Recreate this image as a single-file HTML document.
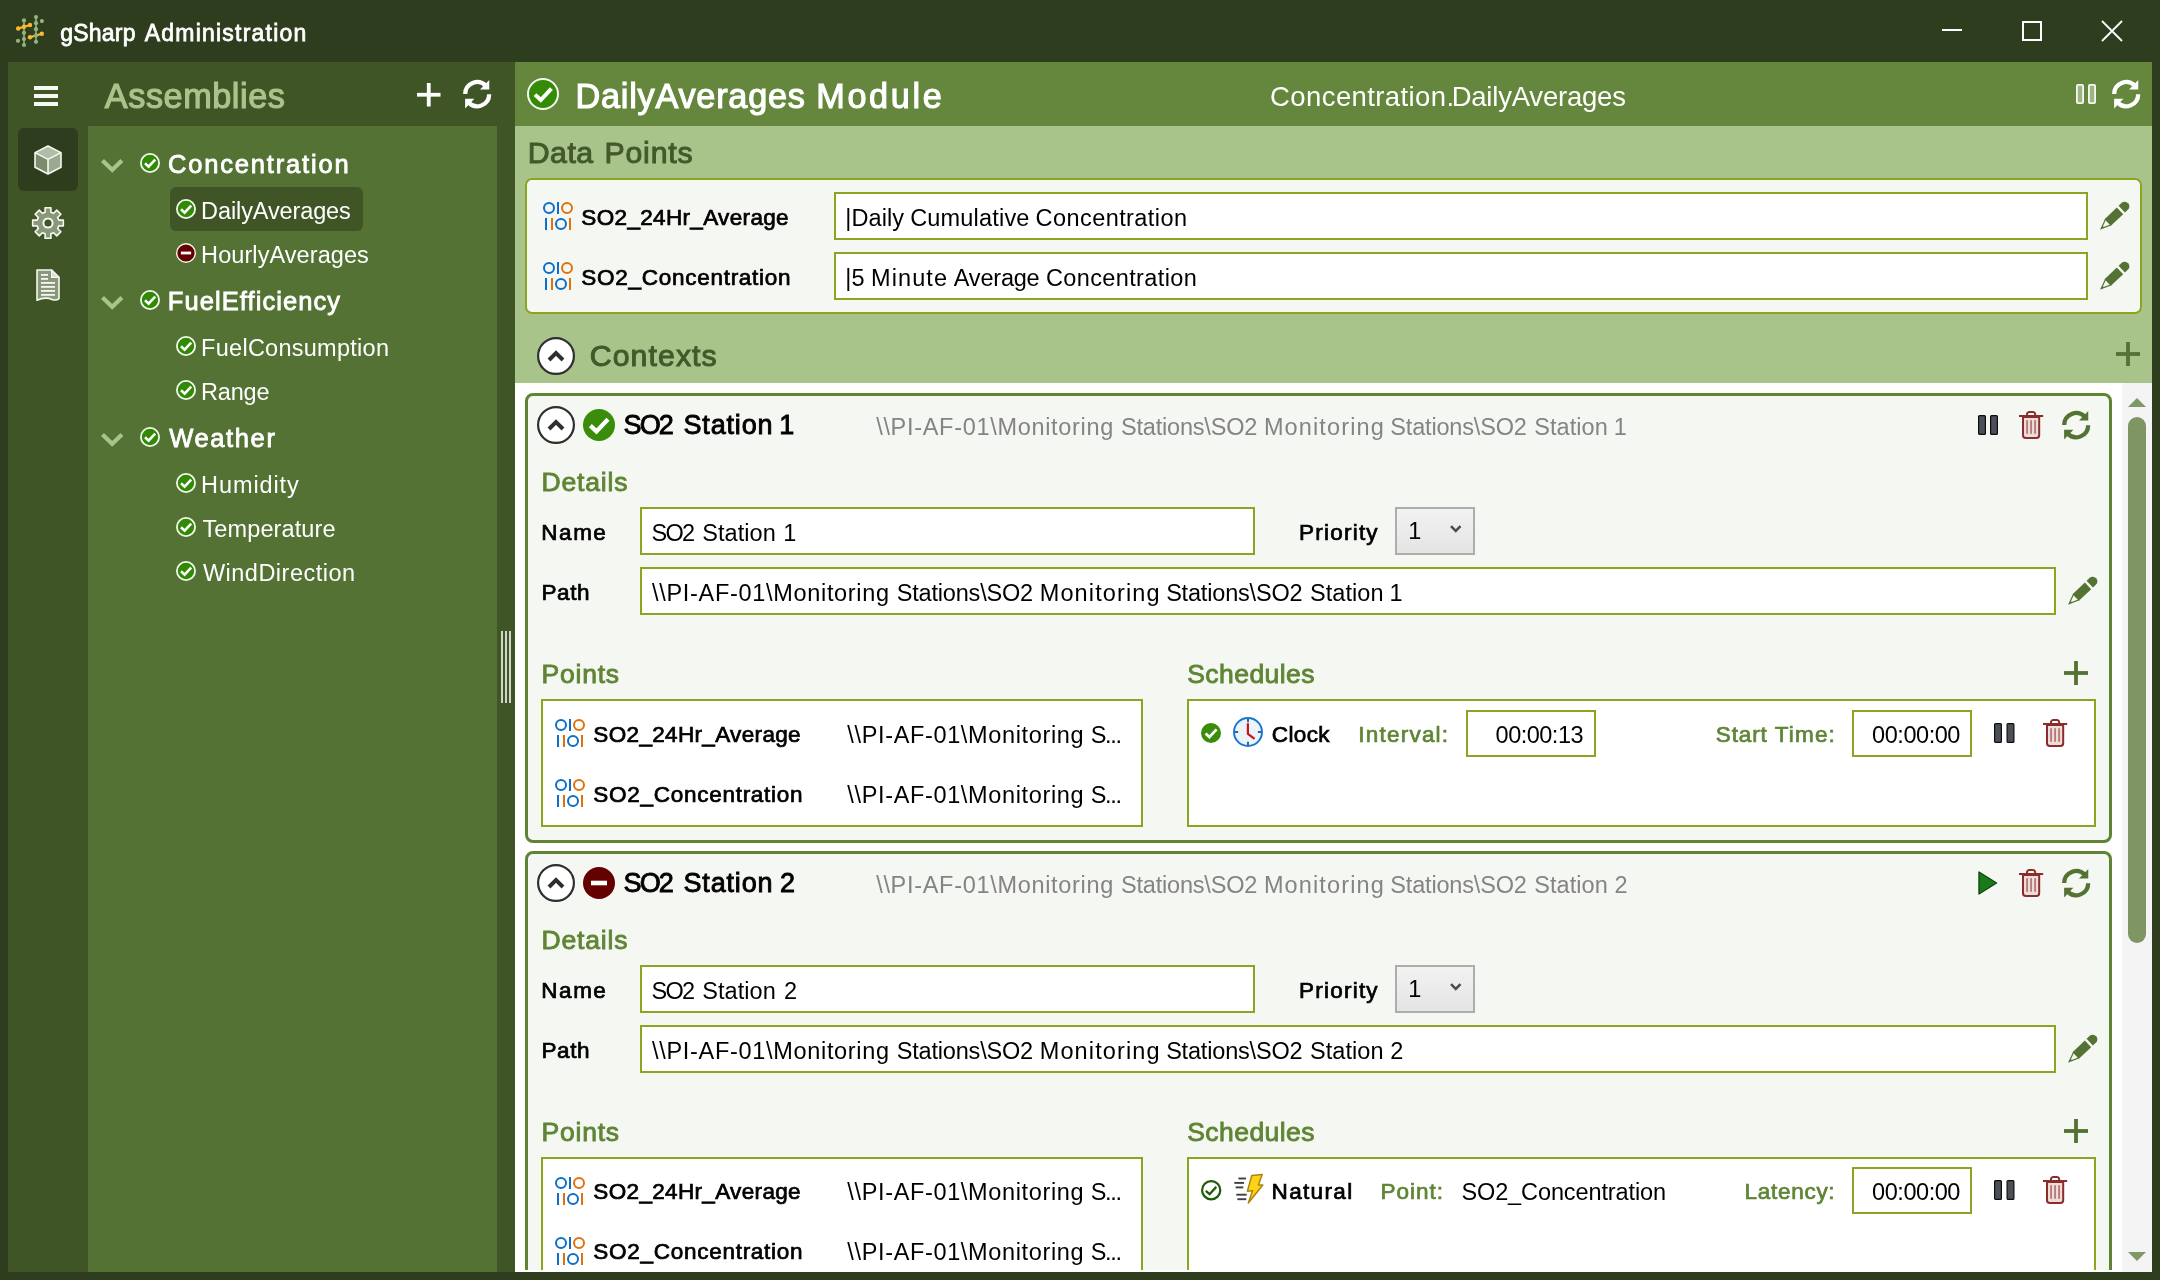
<!DOCTYPE html>
<html lang="en"><head><meta charset="utf-8"><title>gSharp Administration</title>
<style>
html,body{margin:0;padding:0;}
body{width:2160px;height:1280px;overflow:hidden;background:#2f3d1f;position:relative;font-family:"Liberation Sans",Arial,sans-serif;}
#app{position:absolute;left:0;top:0;width:2160px;height:1280px;overflow:hidden;will-change:transform;}
#app div,#app span,#app svg{position:absolute;box-sizing:content-box;}
#app svg{overflow:visible;}
.t{white-space:pre;}
</style></head><body><div id="app">
<svg style="left:0px;top:0px;" width="60" height="60" viewBox="0 0 60 60"><line x1="24" y1="20.4" x2="24" y2="45" stroke="#93b47f" stroke-width="1.6"/><line x1="36" y1="17" x2="36" y2="41.8" stroke="#93b47f" stroke-width="1.6"/><circle cx="24" cy="20.4" r="2.1" fill="#93b47f"/><circle cx="24" cy="32.8" r="2.1" fill="#93b47f"/><circle cx="24" cy="39" r="2.1" fill="#93b47f"/><circle cx="24" cy="45" r="2.1" fill="#93b47f"/><circle cx="36" cy="17" r="2.1" fill="#93b47f"/><circle cx="36" cy="23.2" r="2.1" fill="#93b47f"/><circle cx="36" cy="29.2" r="2.1" fill="#93b47f"/><circle cx="36" cy="41.8" r="2.1" fill="#93b47f"/><circle cx="41.9" cy="21.1" r="2.1" fill="#93b47f"/><circle cx="18" cy="40.8" r="2.1" fill="#93b47f"/><line x1="18.2" y1="28.5" x2="30" y2="25" stroke="#fbb92e" stroke-width="2.2" stroke-linecap="round"/><line x1="30" y1="37.2" x2="41.8" y2="33.7" stroke="#fbb92e" stroke-width="2.2" stroke-linecap="round"/><circle cx="18.2" cy="28.5" r="2.2" fill="#fbb92e"/><circle cx="30" cy="25" r="2.2" fill="#fbb92e"/><circle cx="30" cy="37.2" r="2.2" fill="#fbb92e"/><circle cx="41.8" cy="33.7" r="2.2" fill="#fbb92e"/><circle cx="24" cy="26.75" r="2.3" fill="#fbb92e"/><circle cx="36" cy="35.4" r="2.1" fill="#93b47f"/></svg>
<span class="t " style="left:60.24px;top:19.00px;font-size:23.0px;line-height:28px;color:#ffffff;-webkit-text-stroke:0.76px #ffffff;letter-spacing:0.226px;">gSharp </span>
<span class="t " style="left:144.68px;top:19.00px;font-size:23.0px;line-height:28px;color:#ffffff;-webkit-text-stroke:0.76px #ffffff;letter-spacing:1.230px;">Administration</span>
<div style="left:1942px;top:29px;width:20px;height:2px;background:#ffffff;"></div>
<div style="left:2022px;top:21px;width:16px;height:16px;border:2px solid #ffffff;background:transparent;"></div>
<svg style="left:2101px;top:20px;" width="22" height="22" viewBox="0 0 22 22"><path d="M1 1 L21 21 M21 1 L1 21" stroke="#fff" stroke-width="1.8" fill="none"/></svg>
<div style="left:8px;top:62px;width:507px;height:1210px;background:#3f5526;"></div>
<div style="left:88px;top:126px;width:409px;height:1146px;background:#537233;"></div>
<div style="left:34px;top:86px;width:24px;height:4px;background:#f6f8f3;"></div>
<div style="left:34px;top:94px;width:24px;height:4px;background:#f6f8f3;"></div>
<div style="left:34px;top:102px;width:24px;height:4px;background:#f6f8f3;"></div>
<div style="left:18px;top:128px;width:60px;height:63px;background:#2f3d1f;border-radius:6px;"></div>
<svg style="left:34px;top:145px;" width="28" height="30" viewBox="0 0 28 30"><polygon points="14,1 27,7.6 14,14.4 1,7.6" fill="#b2bda6"/><polygon points="1,7.6 14,14.4 14,29 1,22.2" fill="#7c8b6c"/><polygon points="27,7.6 14,14.4 14,29 27,22.2" fill="#9ca88f"/><path d="M14 1 L27 7.6 V22.2 L14 29 L1 22.2 V7.6 Z M1 7.6 L14 14.4 L27 7.6 M14 14.4 V29" fill="none" stroke="#f6f8f3" stroke-width="1.6" stroke-linejoin="round"/></svg>
<svg style="left:32px;top:207px;" width="32" height="32" viewBox="0 0 32 32"><path d="M13.12 5.18 L13.05 0.68 L18.95 0.68 L18.88 5.18 L21.62 6.31 L24.75 3.08 L28.92 7.25 L25.69 10.38 L26.82 13.12 L31.32 13.05 L31.32 18.95 L26.82 18.88 L25.69 21.62 L28.92 24.75 L24.75 28.92 L21.62 25.69 L18.88 26.82 L18.95 31.32 L13.05 31.32 L13.12 26.82 L10.38 25.69 L7.25 28.92 L3.08 24.75 L6.31 21.62 L5.18 18.88 L0.68 18.95 L0.68 13.05 L5.18 13.12 L6.31 10.38 L3.08 7.25 L7.25 3.08 L10.38 6.31 Z" fill="#8a9879" stroke="#f6f8f3" stroke-width="1.6" stroke-linejoin="round"/><circle cx="16" cy="16" r="4.6" fill="#3f5526" stroke="#f6f8f3" stroke-width="2"/></svg>
<svg style="left:36px;top:268.5px;" width="24" height="33" viewBox="0 0 24 33"><path d="M1 1 H15.6 L23 8.4 V29.6 Q20 32 16 30.4 Q9 27.6 1 31.2 Z" fill="#8a9879" stroke="#f6f8f3" stroke-width="1.6" stroke-linejoin="round"/><path d="M15.6 1 V8.4 H23 Z" fill="#d9dfd2" stroke="#f6f8f3" stroke-width="1.2" stroke-linejoin="round"/><g fill="#f6f8f3"><rect x="5" y="5" width="7" height="1.8"/><rect x="5" y="9" width="7" height="1.8"/><rect x="5" y="13" width="14" height="1.8"/><rect x="5" y="17" width="14" height="1.8"/><rect x="5" y="21" width="14" height="1.8"/><rect x="5" y="25" width="14" height="1.8"/></g></svg>
<span class="t " style="left:104.80px;top:76.00px;font-size:34.25px;line-height:41px;color:#a9c48b;-webkit-text-stroke:1.13px #a9c48b;letter-spacing:0.555px;">Assemblies</span>
<svg style="left:417px;top:82.5px;" width="23.5" height="23.5" viewBox="0 0 23.5 23.5"><rect x="0" y="9.85" width="23.5" height="3.8" fill="#ffffff"/><rect x="9.85" y="0" width="3.8" height="23.5" fill="#ffffff"/></svg>
<svg style="left:462.5px;top:80px;" width="28.4" height="28.4" viewBox="0 0 28 28.2"><path d="M2.1 14 A11.9 11.9 0 0 1 22.6 5.8" fill="none" stroke="#ffffff" stroke-width="4.2"/><polygon points="26,0 26,9.5 16.8,9.5" fill="#ffffff"/><g transform="rotate(180 14 14.1)"><path d="M2.1 14 A11.9 11.9 0 0 1 22.6 5.8" fill="none" stroke="#ffffff" stroke-width="4.2"/><polygon points="26,0 26,9.5 16.8,9.5" fill="#ffffff"/></g></svg>
<div style="left:501px;top:631px;width:2px;height:72px;background:#cfd5c8;"></div>
<div style="left:505px;top:631px;width:2px;height:72px;background:#cfd5c8;"></div>
<div style="left:509px;top:631px;width:2px;height:72px;background:#cfd5c8;"></div>
<svg style="left:100.6px;top:158.9px;" width="22.4" height="13.8" viewBox="0 0 22.4 13.8"><polygon points="0.00,2.89 2.97,0.00 11.20,8.02 19.43,0.00 22.40,2.89 11.20,13.80" fill="#a9c48b"/></svg>
<svg style="left:140px;top:153.20000000000002px;" width="20" height="20" viewBox="0 0 20 20"><circle cx="10" cy="10" r="9.1" fill="#318a04" stroke="#f4f7f0" stroke-width="1.8"/><path d="M5.0 10.2 L8.6 13.600000000000001 L15.2 6.6000000000000005" fill="none" stroke="#fff" stroke-width="2.60"/></svg>
<span class="t " style="left:167.97px;top:149.00px;font-size:25.5px;line-height:31px;color:#ffffff;-webkit-text-stroke:0.84px #ffffff;letter-spacing:1.832px;">Concentration</span>
<div style="left:170px;top:187.3px;width:193px;height:43.5px;background:#3f5526;border-radius:6px;"></div>
<svg style="left:176px;top:199.2px;" width="20" height="20" viewBox="0 0 20 20"><circle cx="10" cy="10" r="9.1" fill="#318a04" stroke="#f4f7f0" stroke-width="1.8"/><path d="M5.0 10.2 L8.6 13.600000000000001 L15.2 6.6000000000000005" fill="none" stroke="#fff" stroke-width="2.60"/></svg>
<span class="t " style="left:201.12px;top:197.00px;font-size:23.5px;line-height:28px;color:#ffffff;letter-spacing:-0.115px;">DailyAverages</span>
<svg style="left:176px;top:243.2px;" width="20" height="20" viewBox="0 0 20 20"><circle cx="10" cy="10" r="9.3" fill="#640000" stroke="#f4f7f0" stroke-width="1.4"/><rect x="4.9" y="8.6" width="10.2" height="2.8" fill="#fff"/></svg>
<span class="t " style="left:201.12px;top:241.00px;font-size:23.5px;line-height:28px;color:#ffffff;letter-spacing:0.072px;">HourlyAverages</span>
<svg style="left:100.6px;top:295.7px;" width="22.4" height="13.8" viewBox="0 0 22.4 13.8"><polygon points="0.00,2.89 2.97,0.00 11.20,8.02 19.43,0.00 22.40,2.89 11.20,13.80" fill="#a9c48b"/></svg>
<svg style="left:140px;top:290.0px;" width="20" height="20" viewBox="0 0 20 20"><circle cx="10" cy="10" r="9.1" fill="#318a04" stroke="#f4f7f0" stroke-width="1.8"/><path d="M5.0 10.2 L8.6 13.600000000000001 L15.2 6.6000000000000005" fill="none" stroke="#fff" stroke-width="2.60"/></svg>
<span class="t " style="left:167.86px;top:286.00px;font-size:25.5px;line-height:31px;color:#ffffff;-webkit-text-stroke:0.84px #ffffff;letter-spacing:1.067px;">FuelEfficiency</span>
<svg style="left:176px;top:336.2px;" width="20" height="20" viewBox="0 0 20 20"><circle cx="10" cy="10" r="9.1" fill="#318a04" stroke="#f4f7f0" stroke-width="1.8"/><path d="M5.0 10.2 L8.6 13.600000000000001 L15.2 6.6000000000000005" fill="none" stroke="#fff" stroke-width="2.60"/></svg>
<span class="t " style="left:201.12px;top:334.00px;font-size:23.5px;line-height:28px;color:#ffffff;letter-spacing:0.263px;">FuelConsumption</span>
<svg style="left:176px;top:380.2px;" width="20" height="20" viewBox="0 0 20 20"><circle cx="10" cy="10" r="9.1" fill="#318a04" stroke="#f4f7f0" stroke-width="1.8"/><path d="M5.0 10.2 L8.6 13.600000000000001 L15.2 6.6000000000000005" fill="none" stroke="#fff" stroke-width="2.60"/></svg>
<span class="t " style="left:201.12px;top:378.00px;font-size:23.5px;line-height:28px;color:#ffffff;letter-spacing:-0.219px;">Range</span>
<svg style="left:100.6px;top:432.6px;" width="22.4" height="13.8" viewBox="0 0 22.4 13.8"><polygon points="0.00,2.89 2.97,0.00 11.20,8.02 19.43,0.00 22.40,2.89 11.20,13.80" fill="#a9c48b"/></svg>
<svg style="left:140px;top:426.90000000000003px;" width="20" height="20" viewBox="0 0 20 20"><circle cx="10" cy="10" r="9.1" fill="#318a04" stroke="#f4f7f0" stroke-width="1.8"/><path d="M5.0 10.2 L8.6 13.600000000000001 L15.2 6.6000000000000005" fill="none" stroke="#fff" stroke-width="2.60"/></svg>
<span class="t " style="left:169.16px;top:423.00px;font-size:25.5px;line-height:31px;color:#ffffff;-webkit-text-stroke:0.84px #ffffff;letter-spacing:1.643px;">Weather</span>
<svg style="left:176px;top:473.2px;" width="20" height="20" viewBox="0 0 20 20"><circle cx="10" cy="10" r="9.1" fill="#318a04" stroke="#f4f7f0" stroke-width="1.8"/><path d="M5.0 10.2 L8.6 13.600000000000001 L15.2 6.6000000000000005" fill="none" stroke="#fff" stroke-width="2.60"/></svg>
<span class="t " style="left:201.12px;top:471.00px;font-size:23.5px;line-height:28px;color:#ffffff;letter-spacing:0.884px;">Humidity</span>
<svg style="left:176px;top:517.2px;" width="20" height="20" viewBox="0 0 20 20"><circle cx="10" cy="10" r="9.1" fill="#318a04" stroke="#f4f7f0" stroke-width="1.8"/><path d="M5.0 10.2 L8.6 13.600000000000001 L15.2 6.6000000000000005" fill="none" stroke="#fff" stroke-width="2.60"/></svg>
<span class="t " style="left:202.50px;top:515.00px;font-size:23.5px;line-height:28px;color:#ffffff;letter-spacing:0.106px;">Temperature</span>
<svg style="left:176px;top:561.2px;" width="20" height="20" viewBox="0 0 20 20"><circle cx="10" cy="10" r="9.1" fill="#318a04" stroke="#f4f7f0" stroke-width="1.8"/><path d="M5.0 10.2 L8.6 13.600000000000001 L15.2 6.6000000000000005" fill="none" stroke="#fff" stroke-width="2.60"/></svg>
<span class="t " style="left:202.94px;top:559.00px;font-size:23.5px;line-height:28px;color:#ffffff;letter-spacing:0.484px;">WindDirection</span>
<div style="left:515px;top:62px;width:1637px;height:64px;background:#64873d;"></div>
<div style="left:515px;top:126px;width:1637px;height:257px;background:#a9c48b;"></div>
<div style="left:515px;top:383px;width:1637px;height:889px;background:#ffffff;"></div>
<svg style="left:527px;top:78px;" width="32" height="32" viewBox="0 0 32 32"><circle cx="16" cy="16" r="15" fill="#348c06" stroke="#f6f8f3" stroke-width="2"/><path d="M8 16.6 L13.8 22 L24.4 10.6" fill="none" stroke="#fff" stroke-width="4"/></svg>
<span class="t " style="left:575.42px;top:76.00px;font-size:34.25px;line-height:41px;color:#ffffff;-webkit-text-stroke:1.13px #ffffff;letter-spacing:0.777px;">DailyAverages </span>
<span class="t " style="left:816.32px;top:76.00px;font-size:34.25px;line-height:41px;color:#ffffff;-webkit-text-stroke:1.13px #ffffff;letter-spacing:2.609px;">Module</span>
<span class="t " style="left:1270.12px;top:80.00px;font-size:27.5px;line-height:33px;color:#ffffff;letter-spacing:0.392px;">Concentration.</span>
<span class="t " style="left:1451.65px;top:80.00px;font-size:27.5px;line-height:33px;color:#ffffff;letter-spacing:-0.210px;">DailyAverages</span>
<svg style="left:2076px;top:84px;" width="20" height="20" viewBox="0 0 20 20"><rect x="0.9" y="0.9" width="6.2" height="18.2" rx="1" fill="#9db581" stroke="#f6f8f3" stroke-width="1.8"/><rect x="12.9" y="0.9" width="6.2" height="18.2" rx="1" fill="#9db581" stroke="#f6f8f3" stroke-width="1.8"/></svg>
<svg style="left:2112px;top:80.4px;" width="28.4" height="28.4" viewBox="0 0 28 28.2"><path d="M2.1 14 A11.9 11.9 0 0 1 22.6 5.8" fill="none" stroke="#ffffff" stroke-width="4.2"/><polygon points="26,0 26,9.5 16.8,9.5" fill="#ffffff"/><g transform="rotate(180 14 14.1)"><path d="M2.1 14 A11.9 11.9 0 0 1 22.6 5.8" fill="none" stroke="#ffffff" stroke-width="4.2"/><polygon points="26,0 26,9.5 16.8,9.5" fill="#ffffff"/></g></svg>
<span class="t " style="left:527.66px;top:135.00px;font-size:30.25px;line-height:36px;color:#43592b;-webkit-text-stroke:1.00px #43592b;letter-spacing:0.534px;">Data </span>
<span class="t " style="left:604.56px;top:135.00px;font-size:30.25px;line-height:36px;color:#43592b;-webkit-text-stroke:1.00px #43592b;letter-spacing:0.788px;">Points</span>
<div style="left:525px;top:178px;width:1613px;height:132px;border:2px solid #8aa620;background:#f5f7f2;border-radius:7px;"></div>
<svg style="left:543px;top:202px;" width="30" height="28" viewBox="0 0 30 28"><circle cx="6" cy="6" r="5" fill="none" stroke="#0b6fcb" stroke-width="2"/><rect x="14" y="0" width="2" height="12" fill="#0b6fcb"/><circle cx="24" cy="6" r="5" fill="none" stroke="#e1710a" stroke-width="2"/><rect x="2" y="16" width="2" height="12" fill="#0b6fcb"/><rect x="8" y="16" width="2" height="12" fill="#e1710a"/><circle cx="18" cy="22" r="5" fill="none" stroke="#0b6fcb" stroke-width="2"/><rect x="26" y="16" width="2" height="12" fill="#e1710a"/></svg>
<span class="t " style="left:581.37px;top:204.00px;font-size:22.5px;line-height:27px;color:#000000;-webkit-text-stroke:0.74px #000000;letter-spacing:0.334px;">SO2_24Hr_Average</span>
<div style="left:834px;top:192px;width:1250px;height:44px;border:2px solid #8aa620;background:#ffffff;"></div>
<span class="t " style="left:845.24px;top:204.00px;font-size:23.5px;line-height:28px;color:#000000;letter-spacing:0.090px;">|Daily </span>
<span class="t " style="left:910.21px;top:204.00px;font-size:23.5px;line-height:28px;color:#000000;letter-spacing:0.181px;">Cumulative </span>
<span class="t " style="left:1035.61px;top:204.00px;font-size:23.5px;line-height:28px;color:#000000;letter-spacing:0.423px;">Concentration</span>
<svg style="left:2100px;top:202px;" width="28" height="28" viewBox="0 0 28 28"><g transform="translate(0,27.8) rotate(-43.5)"><polygon points="0,0 11.6,-4.6 11.6,4.6" fill="#537233"/><polygon points="4.6,-0.55 11.0,-3.1 11.0,3.1 4.6,0.55" fill="#f5f7f2"/><rect x="10.6" y="-4.6" width="17" height="9.2" fill="#537233"/><path d="M30 -4.6 H34.3 A4.4 4.6 0 0 1 34.3 4.6 H30 Z" fill="#537233"/></g></svg>
<svg style="left:543px;top:262px;" width="30" height="28" viewBox="0 0 30 28"><circle cx="6" cy="6" r="5" fill="none" stroke="#0b6fcb" stroke-width="2"/><rect x="14" y="0" width="2" height="12" fill="#0b6fcb"/><circle cx="24" cy="6" r="5" fill="none" stroke="#e1710a" stroke-width="2"/><rect x="2" y="16" width="2" height="12" fill="#0b6fcb"/><rect x="8" y="16" width="2" height="12" fill="#e1710a"/><circle cx="18" cy="22" r="5" fill="none" stroke="#0b6fcb" stroke-width="2"/><rect x="26" y="16" width="2" height="12" fill="#e1710a"/></svg>
<span class="t " style="left:581.37px;top:264.00px;font-size:22.5px;line-height:27px;color:#000000;-webkit-text-stroke:0.74px #000000;letter-spacing:0.723px;">SO2_Concentration</span>
<div style="left:834px;top:252px;width:1250px;height:44px;border:2px solid #8aa620;background:#ffffff;"></div>
<span class="t " style="left:845.24px;top:264.00px;font-size:23.5px;line-height:28px;color:#000000;letter-spacing:0.213px;">|5 </span>
<span class="t " style="left:871.02px;top:264.00px;font-size:23.5px;line-height:28px;color:#000000;letter-spacing:1.095px;">Minute </span>
<span class="t " style="left:953.80px;top:264.00px;font-size:23.5px;line-height:28px;color:#000000;letter-spacing:-0.204px;">Average </span>
<span class="t " style="left:1045.91px;top:264.00px;font-size:23.5px;line-height:28px;color:#000000;letter-spacing:0.381px;">Concentration</span>
<svg style="left:2100px;top:262px;" width="28" height="28" viewBox="0 0 28 28"><g transform="translate(0,27.8) rotate(-43.5)"><polygon points="0,0 11.6,-4.6 11.6,4.6" fill="#537233"/><polygon points="4.6,-0.55 11.0,-3.1 11.0,3.1 4.6,0.55" fill="#f5f7f2"/><rect x="10.6" y="-4.6" width="17" height="9.2" fill="#537233"/><path d="M30 -4.6 H34.3 A4.4 4.6 0 0 1 34.3 4.6 H30 Z" fill="#537233"/></g></svg>
<svg style="left:537px;top:336.5px;" width="38" height="38" viewBox="0 0 38 38"><circle cx="19" cy="19" r="17.9" fill="#fff" stroke="#2f2f2f" stroke-width="2.2"/><path d="M12 23.0 L19 16.0 L26 23.0" fill="none" stroke="#2f2f2f" stroke-width="3.9"/></svg>
<span class="t " style="left:589.70px;top:338.00px;font-size:30.25px;line-height:36px;color:#43592b;-webkit-text-stroke:1.00px #43592b;letter-spacing:1.098px;">Contexts</span>
<svg style="left:2116px;top:342px;" width="24" height="24" viewBox="0 0 24 24"><rect x="0" y="10.1" width="24" height="3.8" fill="#537233"/><rect x="10.1" y="0" width="3.8" height="24" fill="#537233"/></svg>
<div style="left:2122px;top:383px;width:30px;height:889px;background:#f4f4f4;"></div>
<svg style="left:2128px;top:397.5px;" width="18" height="9" viewBox="0 0 18 9"><polygon points="0,9 9,0 18,9" fill="#7e9866"/></svg>
<svg style="left:2128px;top:1252px;" width="18" height="9" viewBox="0 0 18 9"><polygon points="0,0 9,9 18,0" fill="#7e9866"/></svg>
<div style="left:2128px;top:417px;width:18px;height:526px;background:#7d9664;border-radius:9px;"></div>
<div style="left:525px;top:393px;width:1581px;height:444px;border:3px solid #5f8434;background:#f5f7f2;border-radius:8px;"></div>
<svg style="left:537px;top:405.8px;" width="38" height="38" viewBox="0 0 38 38"><circle cx="19" cy="19" r="17.9" fill="#fff" stroke="#2f2f2f" stroke-width="2.2"/><path d="M12 23.0 L19 16.0 L26 23.0" fill="none" stroke="#2f2f2f" stroke-width="3.9"/></svg>
<svg style="left:583px;top:409px;" width="32" height="32" viewBox="0 0 32 32"><circle cx="16" cy="16" r="16" fill="#3a8d0b"/><path d="M7.36 16.64 L13.44 22.4 L24.96 10.24" fill="none" stroke="#fff" stroke-width="4.32"/></svg>
<span class="t " style="left:623.46px;top:409.00px;font-size:27.0px;line-height:32px;color:#000000;-webkit-text-stroke:0.89px #000000;letter-spacing:-1.796px;">SO2 </span>
<span class="t " style="left:683.46px;top:409.00px;font-size:27.0px;line-height:32px;color:#000000;-webkit-text-stroke:0.89px #000000;letter-spacing:0.837px;">Station </span>
<span class="t " style="left:779.25px;top:409.00px;font-size:27.0px;line-height:32px;color:#000000;-webkit-text-stroke:0.89px #000000;">1</span>
<span class="t " style="left:876.20px;top:413.00px;font-size:23.5px;line-height:28px;color:#848484;letter-spacing:0.689px;">\\PI-AF-01\Monitoring </span>
<span class="t " style="left:1120.94px;top:413.00px;font-size:23.5px;line-height:28px;color:#848484;letter-spacing:-0.186px;">Stations\SO2 </span>
<span class="t " style="left:1263.93px;top:413.00px;font-size:23.5px;line-height:28px;color:#848484;letter-spacing:1.121px;">Monitoring </span>
<span class="t " style="left:1390.34px;top:413.00px;font-size:23.5px;line-height:28px;color:#848484;letter-spacing:-0.177px;">Stations\SO2 </span>
<span class="t " style="left:1534.24px;top:413.00px;font-size:23.5px;line-height:28px;color:#848484;letter-spacing:0.056px;">Station </span>
<span class="t " style="left:1613.75px;top:413.00px;font-size:23.5px;line-height:28px;color:#848484;">1</span>
<svg style="left:1978px;top:415px;" width="20" height="20" viewBox="0 0 20 20"><rect x="0.6" y="0.6" width="6.8" height="18.8" rx="1" fill="#4a4f58" stroke="#0d0d0d" stroke-width="1.2"/><rect x="12.6" y="0.6" width="6.8" height="18.8" rx="1" fill="#4a4f58" stroke="#0d0d0d" stroke-width="1.2"/></svg>
<svg style="left:2019.4px;top:411px;" width="24.2" height="28" viewBox="0 0 24.2 28"><path d="M8 4.6 V3.4 A2.4 2.4 0 0 1 10.4 1 H13.8 A2.4 2.4 0 0 1 16.2 3.4 V4.6" fill="none" stroke="#8b2d2d" stroke-width="2"/><path d="M4 6 V24.2 A2.8 2.8 0 0 0 6.8 27 H17.4 A2.8 2.8 0 0 0 20.2 24.2 V6 Z" fill="#ecdcda" stroke="#8b2d2d" stroke-width="2"/><rect x="0" y="4" width="24.2" height="2" fill="#8b2d2d"/><rect x="7.2" y="9.2" width="1.8" height="13.6" fill="#b87878"/><rect x="11.2" y="9.2" width="1.8" height="13.6" fill="#b87878"/><rect x="15.2" y="9.2" width="1.8" height="13.6" fill="#b87878"/></svg>
<svg style="left:2062px;top:410.6px;" width="28.4" height="28.4" viewBox="0 0 28 28.2"><path d="M2.1 14 A11.9 11.9 0 0 1 22.6 5.8" fill="none" stroke="#537233" stroke-width="4.2"/><polygon points="26,0 26,9.5 16.8,9.5" fill="#537233"/><g transform="rotate(180 14 14.1)"><path d="M2.1 14 A11.9 11.9 0 0 1 22.6 5.8" fill="none" stroke="#537233" stroke-width="4.2"/><polygon points="26,0 26,9.5 16.8,9.5" fill="#537233"/></g></svg>
<span class="t " style="left:541.41px;top:466.00px;font-size:26.5px;line-height:32px;color:#5f8535;-webkit-text-stroke:0.87px #5f8535;letter-spacing:0.865px;">Details</span>
<span class="t " style="left:541.36px;top:519.00px;font-size:22.5px;line-height:27px;color:#000000;-webkit-text-stroke:0.74px #000000;letter-spacing:1.503px;">Name</span>
<div style="left:640px;top:507px;width:611px;height:44px;border:2px solid #8aa620;background:#ffffff;"></div>
<span class="t " style="left:651.44px;top:519.00px;font-size:23.5px;line-height:28px;color:#000000;letter-spacing:-1.656px;">SO2 </span>
<span class="t " style="left:702.24px;top:519.00px;font-size:23.5px;line-height:28px;color:#000000;letter-spacing:0.073px;">Station </span>
<span class="t " style="left:783.25px;top:519.00px;font-size:23.5px;line-height:28px;color:#000000;">1</span>
<span class="t " style="left:1299.06px;top:519.00px;font-size:22.5px;line-height:27px;color:#000000;-webkit-text-stroke:0.74px #000000;letter-spacing:1.224px;">Priority</span>
<div style="left:1395px;top:507px;width:76px;height:44px;border:2px solid #adadad;background:linear-gradient(#f2f2f2,#e4e4e4);"></div>
<span class="t " style="left:1408.25px;top:517.00px;font-size:23.5px;line-height:28px;color:#000000;">1</span>
<svg style="left:1450px;top:525px;" width="11.5" height="8" viewBox="0 0 11.5 8"><path d="M1 1.2 L5.75 6 L10.5 1.2" fill="none" stroke="#4c4c4c" stroke-width="2.5"/></svg>
<span class="t " style="left:541.46px;top:579.00px;font-size:22.5px;line-height:27px;color:#000000;-webkit-text-stroke:0.74px #000000;letter-spacing:0.619px;">Path</span>
<div style="left:640px;top:567px;width:1412px;height:44px;border:2px solid #8aa620;background:#ffffff;"></div>
<span class="t " style="left:652.00px;top:579.00px;font-size:23.5px;line-height:28px;color:#000000;letter-spacing:0.689px;">\\PI-AF-01\Monitoring </span>
<span class="t " style="left:896.74px;top:579.00px;font-size:23.5px;line-height:28px;color:#000000;letter-spacing:-0.186px;">Stations\SO2 </span>
<span class="t " style="left:1039.72px;top:579.00px;font-size:23.5px;line-height:28px;color:#000000;letter-spacing:1.121px;">Monitoring </span>
<span class="t " style="left:1166.14px;top:579.00px;font-size:23.5px;line-height:28px;color:#000000;letter-spacing:-0.177px;">Stations\SO2 </span>
<span class="t " style="left:1310.04px;top:579.00px;font-size:23.5px;line-height:28px;color:#000000;letter-spacing:0.056px;">Station </span>
<span class="t " style="left:1389.55px;top:579.00px;font-size:23.5px;line-height:28px;color:#000000;">1</span>
<svg style="left:2068px;top:577px;" width="28" height="28" viewBox="0 0 28 28"><g transform="translate(0,27.8) rotate(-43.5)"><polygon points="0,0 11.6,-4.6 11.6,4.6" fill="#537233"/><polygon points="4.6,-0.55 11.0,-3.1 11.0,3.1 4.6,0.55" fill="#f5f7f2"/><rect x="10.6" y="-4.6" width="17" height="9.2" fill="#537233"/><path d="M30 -4.6 H34.3 A4.4 4.6 0 0 1 34.3 4.6 H30 Z" fill="#537233"/></g></svg>
<span class="t " style="left:541.61px;top:658.00px;font-size:26.5px;line-height:32px;color:#5f8535;-webkit-text-stroke:0.87px #5f8535;letter-spacing:0.753px;">Points</span>
<div style="left:541px;top:699px;width:598px;height:124px;border:2px solid #8aa620;background:#ffffff;"></div>
<svg style="left:555px;top:719px;" width="30" height="28" viewBox="0 0 30 28"><circle cx="6" cy="6" r="5" fill="none" stroke="#0b6fcb" stroke-width="2"/><rect x="14" y="0" width="2" height="12" fill="#0b6fcb"/><circle cx="24" cy="6" r="5" fill="none" stroke="#e1710a" stroke-width="2"/><rect x="2" y="16" width="2" height="12" fill="#0b6fcb"/><rect x="8" y="16" width="2" height="12" fill="#e1710a"/><circle cx="18" cy="22" r="5" fill="none" stroke="#0b6fcb" stroke-width="2"/><rect x="26" y="16" width="2" height="12" fill="#e1710a"/></svg>
<span class="t " style="left:593.37px;top:721.00px;font-size:22.5px;line-height:27px;color:#000000;-webkit-text-stroke:0.74px #000000;letter-spacing:0.334px;">SO2_24Hr_Average</span>
<span class="t " style="left:847.30px;top:721.00px;font-size:23.5px;line-height:28px;color:#000000;letter-spacing:0.649px;">\\PI-AF-01\Monitoring </span>
<span class="t " style="left:1090.74px;top:721.00px;font-size:23.5px;line-height:28px;color:#000000;letter-spacing:-1.308px;">S...</span>
<svg style="left:555px;top:779px;" width="30" height="28" viewBox="0 0 30 28"><circle cx="6" cy="6" r="5" fill="none" stroke="#0b6fcb" stroke-width="2"/><rect x="14" y="0" width="2" height="12" fill="#0b6fcb"/><circle cx="24" cy="6" r="5" fill="none" stroke="#e1710a" stroke-width="2"/><rect x="2" y="16" width="2" height="12" fill="#0b6fcb"/><rect x="8" y="16" width="2" height="12" fill="#e1710a"/><circle cx="18" cy="22" r="5" fill="none" stroke="#0b6fcb" stroke-width="2"/><rect x="26" y="16" width="2" height="12" fill="#e1710a"/></svg>
<span class="t " style="left:593.37px;top:781.00px;font-size:22.5px;line-height:27px;color:#000000;-webkit-text-stroke:0.74px #000000;letter-spacing:0.723px;">SO2_Concentration</span>
<span class="t " style="left:847.30px;top:781.00px;font-size:23.5px;line-height:28px;color:#000000;letter-spacing:0.649px;">\\PI-AF-01\Monitoring </span>
<span class="t " style="left:1090.74px;top:781.00px;font-size:23.5px;line-height:28px;color:#000000;letter-spacing:-1.308px;">S...</span>
<span class="t " style="left:1187.25px;top:658.00px;font-size:26.5px;line-height:32px;color:#5f8535;-webkit-text-stroke:0.87px #5f8535;letter-spacing:0.438px;">Schedules</span>
<svg style="left:2064px;top:661px;" width="24" height="24" viewBox="0 0 24 24"><rect x="0" y="10.1" width="24" height="3.8" fill="#537233"/><rect x="10.1" y="0" width="3.8" height="24" fill="#537233"/></svg>
<div style="left:1187px;top:699px;width:905px;height:124px;border:2px solid #8aa620;background:#ffffff;"></div>
<svg style="left:1201px;top:723px;" width="20" height="20" viewBox="0 0 20 20"><circle cx="10" cy="10" r="10" fill="#3a8d0b"/><path d="M4.6000000000000005 10.4 L8.4 14.0 L15.600000000000001 6.4" fill="none" stroke="#fff" stroke-width="2.70"/></svg>
<svg style="left:1232.5px;top:717px;" width="30" height="30" viewBox="0 0 30 30"><circle cx="15" cy="15" r="14" fill="#ebf3fb" stroke="#1a78d2" stroke-width="2"/><g stroke="#173f73" stroke-width="1.6"><line x1="15" y1="2" x2="15" y2="5.2"/><line x1="15" y1="24.8" x2="15" y2="28"/><line x1="2" y1="15" x2="5.2" y2="15"/><line x1="24.8" y1="15" x2="28" y2="15"/></g><path d="M14.9 6.2 V16.8 L21.6 21.8" fill="none" stroke="#c4161c" stroke-width="2.2" stroke-linejoin="round"/></svg>
<span class="t " style="left:1271.75px;top:721.00px;font-size:22.5px;line-height:27px;color:#000000;-webkit-text-stroke:0.74px #000000;letter-spacing:0.393px;">Clock</span>
<span class="t " style="left:1358.31px;top:721.00px;font-size:22.5px;line-height:27px;color:#5f8535;-webkit-text-stroke:0.74px #5f8535;letter-spacing:1.220px;">Interval:</span>
<svg style="left:1466px;top:709.5px;" width="130" height="47" viewBox="0 0 130 47"><rect x="1.0" y="1.0" width="128" height="45" fill="#ffffff" stroke="#8aa620" stroke-width="2"/></svg>
<span class="t " style="left:1495.62px;top:721.00px;font-size:23.5px;line-height:28px;color:#000000;letter-spacing:-0.509px;">00:00:13</span>
<span class="t " style="left:1715.87px;top:721.00px;font-size:22.5px;line-height:27px;color:#5f8535;-webkit-text-stroke:0.74px #5f8535;letter-spacing:0.871px;">Start </span>
<span class="t " style="left:1774.77px;top:721.00px;font-size:22.5px;line-height:27px;color:#5f8535;-webkit-text-stroke:0.74px #5f8535;letter-spacing:1.155px;">Time:</span>
<svg style="left:1852px;top:709.5px;" width="120" height="47" viewBox="0 0 120 47"><rect x="1.0" y="1.0" width="118" height="45" fill="#ffffff" stroke="#8aa620" stroke-width="2"/></svg>
<span class="t " style="left:1872.12px;top:721.00px;font-size:23.5px;line-height:28px;color:#000000;letter-spacing:-0.455px;">00:00:00</span>
<svg style="left:1994px;top:723px;" width="20.5" height="20" viewBox="0 0 20.5 20"><rect x="0.6" y="0.6" width="6.8" height="18.8" rx="1" fill="#4a4f58" stroke="#0d0d0d" stroke-width="1.2"/><rect x="13.1" y="0.6" width="6.8" height="18.8" rx="1" fill="#4a4f58" stroke="#0d0d0d" stroke-width="1.2"/></svg>
<svg style="left:2043px;top:719px;" width="24.2" height="28" viewBox="0 0 24.2 28"><path d="M8 4.6 V3.4 A2.4 2.4 0 0 1 10.4 1 H13.8 A2.4 2.4 0 0 1 16.2 3.4 V4.6" fill="none" stroke="#8b2d2d" stroke-width="2"/><path d="M4 6 V24.2 A2.8 2.8 0 0 0 6.8 27 H17.4 A2.8 2.8 0 0 0 20.2 24.2 V6 Z" fill="#ecdcda" stroke="#8b2d2d" stroke-width="2"/><rect x="0" y="4" width="24.2" height="2" fill="#8b2d2d"/><rect x="7.2" y="9.2" width="1.8" height="13.6" fill="#b87878"/><rect x="11.2" y="9.2" width="1.8" height="13.6" fill="#b87878"/><rect x="15.2" y="9.2" width="1.8" height="13.6" fill="#b87878"/></svg>
<div style="left:525px;top:851px;width:1581px;height:444px;border:3px solid #5f8434;background:#f5f7f2;border-radius:8px;"></div>
<svg style="left:537px;top:863.8px;" width="38" height="38" viewBox="0 0 38 38"><circle cx="19" cy="19" r="17.9" fill="#fff" stroke="#2f2f2f" stroke-width="2.2"/><path d="M12 23.0 L19 16.0 L26 23.0" fill="none" stroke="#2f2f2f" stroke-width="3.9"/></svg>
<svg style="left:583px;top:867px;" width="32" height="32" viewBox="0 0 32 32"><circle cx="16" cy="16" r="16" fill="#640000"/><rect x="8" y="13.7" width="16" height="4.6" fill="#fff"/></svg>
<span class="t " style="left:623.46px;top:867.00px;font-size:27.0px;line-height:32px;color:#000000;-webkit-text-stroke:0.89px #000000;letter-spacing:-1.796px;">SO2 </span>
<span class="t " style="left:683.46px;top:867.00px;font-size:27.0px;line-height:32px;color:#000000;-webkit-text-stroke:0.89px #000000;letter-spacing:0.837px;">Station </span>
<span class="t " style="left:779.93px;top:867.00px;font-size:27.0px;line-height:32px;color:#000000;-webkit-text-stroke:0.89px #000000;">2</span>
<span class="t " style="left:876.20px;top:871.00px;font-size:23.5px;line-height:28px;color:#848484;letter-spacing:0.689px;">\\PI-AF-01\Monitoring </span>
<span class="t " style="left:1120.94px;top:871.00px;font-size:23.5px;line-height:28px;color:#848484;letter-spacing:-0.186px;">Stations\SO2 </span>
<span class="t " style="left:1263.93px;top:871.00px;font-size:23.5px;line-height:28px;color:#848484;letter-spacing:1.121px;">Monitoring </span>
<span class="t " style="left:1390.34px;top:871.00px;font-size:23.5px;line-height:28px;color:#848484;letter-spacing:-0.177px;">Stations\SO2 </span>
<span class="t " style="left:1534.24px;top:871.00px;font-size:23.5px;line-height:28px;color:#848484;letter-spacing:0.056px;">Station </span>
<span class="t " style="left:1614.38px;top:871.00px;font-size:23.5px;line-height:28px;color:#848484;">2</span>
<svg style="left:1978px;top:871px;" width="20" height="24" viewBox="0 0 20 24"><path d="M1 1 L18.6 12 L1 23 Z" fill="#1a7a1a" stroke="#0c4a0c" stroke-width="1.4" stroke-linejoin="round"/></svg>
<svg style="left:2019.4px;top:869px;" width="24.2" height="28" viewBox="0 0 24.2 28"><path d="M8 4.6 V3.4 A2.4 2.4 0 0 1 10.4 1 H13.8 A2.4 2.4 0 0 1 16.2 3.4 V4.6" fill="none" stroke="#8b2d2d" stroke-width="2"/><path d="M4 6 V24.2 A2.8 2.8 0 0 0 6.8 27 H17.4 A2.8 2.8 0 0 0 20.2 24.2 V6 Z" fill="#ecdcda" stroke="#8b2d2d" stroke-width="2"/><rect x="0" y="4" width="24.2" height="2" fill="#8b2d2d"/><rect x="7.2" y="9.2" width="1.8" height="13.6" fill="#b87878"/><rect x="11.2" y="9.2" width="1.8" height="13.6" fill="#b87878"/><rect x="15.2" y="9.2" width="1.8" height="13.6" fill="#b87878"/></svg>
<svg style="left:2062px;top:868.6px;" width="28.4" height="28.4" viewBox="0 0 28 28.2"><path d="M2.1 14 A11.9 11.9 0 0 1 22.6 5.8" fill="none" stroke="#537233" stroke-width="4.2"/><polygon points="26,0 26,9.5 16.8,9.5" fill="#537233"/><g transform="rotate(180 14 14.1)"><path d="M2.1 14 A11.9 11.9 0 0 1 22.6 5.8" fill="none" stroke="#537233" stroke-width="4.2"/><polygon points="26,0 26,9.5 16.8,9.5" fill="#537233"/></g></svg>
<span class="t " style="left:541.41px;top:924.00px;font-size:26.5px;line-height:32px;color:#5f8535;-webkit-text-stroke:0.87px #5f8535;letter-spacing:0.865px;">Details</span>
<span class="t " style="left:541.36px;top:977.00px;font-size:22.5px;line-height:27px;color:#000000;-webkit-text-stroke:0.74px #000000;letter-spacing:1.503px;">Name</span>
<div style="left:640px;top:965px;width:611px;height:44px;border:2px solid #8aa620;background:#ffffff;"></div>
<span class="t " style="left:651.44px;top:977.00px;font-size:23.5px;line-height:28px;color:#000000;letter-spacing:-1.656px;">SO2 </span>
<span class="t " style="left:702.24px;top:977.00px;font-size:23.5px;line-height:28px;color:#000000;letter-spacing:0.073px;">Station </span>
<span class="t " style="left:783.88px;top:977.00px;font-size:23.5px;line-height:28px;color:#000000;">2</span>
<span class="t " style="left:1299.06px;top:977.00px;font-size:22.5px;line-height:27px;color:#000000;-webkit-text-stroke:0.74px #000000;letter-spacing:1.224px;">Priority</span>
<div style="left:1395px;top:965px;width:76px;height:44px;border:2px solid #adadad;background:linear-gradient(#f2f2f2,#e4e4e4);"></div>
<span class="t " style="left:1408.25px;top:975.00px;font-size:23.5px;line-height:28px;color:#000000;">1</span>
<svg style="left:1450px;top:983px;" width="11.5" height="8" viewBox="0 0 11.5 8"><path d="M1 1.2 L5.75 6 L10.5 1.2" fill="none" stroke="#4c4c4c" stroke-width="2.5"/></svg>
<span class="t " style="left:541.46px;top:1037.00px;font-size:22.5px;line-height:27px;color:#000000;-webkit-text-stroke:0.74px #000000;letter-spacing:0.619px;">Path</span>
<div style="left:640px;top:1025px;width:1412px;height:44px;border:2px solid #8aa620;background:#ffffff;"></div>
<span class="t " style="left:652.00px;top:1037.00px;font-size:23.5px;line-height:28px;color:#000000;letter-spacing:0.689px;">\\PI-AF-01\Monitoring </span>
<span class="t " style="left:896.74px;top:1037.00px;font-size:23.5px;line-height:28px;color:#000000;letter-spacing:-0.186px;">Stations\SO2 </span>
<span class="t " style="left:1039.72px;top:1037.00px;font-size:23.5px;line-height:28px;color:#000000;letter-spacing:1.121px;">Monitoring </span>
<span class="t " style="left:1166.14px;top:1037.00px;font-size:23.5px;line-height:28px;color:#000000;letter-spacing:-0.177px;">Stations\SO2 </span>
<span class="t " style="left:1310.04px;top:1037.00px;font-size:23.5px;line-height:28px;color:#000000;letter-spacing:0.056px;">Station </span>
<span class="t " style="left:1390.17px;top:1037.00px;font-size:23.5px;line-height:28px;color:#000000;">2</span>
<svg style="left:2068px;top:1035px;" width="28" height="28" viewBox="0 0 28 28"><g transform="translate(0,27.8) rotate(-43.5)"><polygon points="0,0 11.6,-4.6 11.6,4.6" fill="#537233"/><polygon points="4.6,-0.55 11.0,-3.1 11.0,3.1 4.6,0.55" fill="#f5f7f2"/><rect x="10.6" y="-4.6" width="17" height="9.2" fill="#537233"/><path d="M30 -4.6 H34.3 A4.4 4.6 0 0 1 34.3 4.6 H30 Z" fill="#537233"/></g></svg>
<span class="t " style="left:541.61px;top:1116.00px;font-size:26.5px;line-height:32px;color:#5f8535;-webkit-text-stroke:0.87px #5f8535;letter-spacing:0.753px;">Points</span>
<div style="left:541px;top:1157px;width:598px;height:124px;border:2px solid #8aa620;background:#ffffff;"></div>
<svg style="left:555px;top:1177px;" width="30" height="28" viewBox="0 0 30 28"><circle cx="6" cy="6" r="5" fill="none" stroke="#0b6fcb" stroke-width="2"/><rect x="14" y="0" width="2" height="12" fill="#0b6fcb"/><circle cx="24" cy="6" r="5" fill="none" stroke="#e1710a" stroke-width="2"/><rect x="2" y="16" width="2" height="12" fill="#0b6fcb"/><rect x="8" y="16" width="2" height="12" fill="#e1710a"/><circle cx="18" cy="22" r="5" fill="none" stroke="#0b6fcb" stroke-width="2"/><rect x="26" y="16" width="2" height="12" fill="#e1710a"/></svg>
<span class="t " style="left:593.37px;top:1178.00px;font-size:22.5px;line-height:27px;color:#000000;-webkit-text-stroke:0.74px #000000;letter-spacing:0.334px;">SO2_24Hr_Average</span>
<span class="t " style="left:847.30px;top:1178.00px;font-size:23.5px;line-height:28px;color:#000000;letter-spacing:0.649px;">\\PI-AF-01\Monitoring </span>
<span class="t " style="left:1090.74px;top:1178.00px;font-size:23.5px;line-height:28px;color:#000000;letter-spacing:-1.308px;">S...</span>
<svg style="left:555px;top:1237px;" width="30" height="28" viewBox="0 0 30 28"><circle cx="6" cy="6" r="5" fill="none" stroke="#0b6fcb" stroke-width="2"/><rect x="14" y="0" width="2" height="12" fill="#0b6fcb"/><circle cx="24" cy="6" r="5" fill="none" stroke="#e1710a" stroke-width="2"/><rect x="2" y="16" width="2" height="12" fill="#0b6fcb"/><rect x="8" y="16" width="2" height="12" fill="#e1710a"/><circle cx="18" cy="22" r="5" fill="none" stroke="#0b6fcb" stroke-width="2"/><rect x="26" y="16" width="2" height="12" fill="#e1710a"/></svg>
<span class="t " style="left:593.37px;top:1238.00px;font-size:22.5px;line-height:27px;color:#000000;-webkit-text-stroke:0.74px #000000;letter-spacing:0.723px;">SO2_Concentration</span>
<span class="t " style="left:847.30px;top:1238.00px;font-size:23.5px;line-height:28px;color:#000000;letter-spacing:0.649px;">\\PI-AF-01\Monitoring </span>
<span class="t " style="left:1090.74px;top:1238.00px;font-size:23.5px;line-height:28px;color:#000000;letter-spacing:-1.308px;">S...</span>
<span class="t " style="left:1187.25px;top:1116.00px;font-size:26.5px;line-height:32px;color:#5f8535;-webkit-text-stroke:0.87px #5f8535;letter-spacing:0.438px;">Schedules</span>
<svg style="left:2064px;top:1119px;" width="24" height="24" viewBox="0 0 24 24"><rect x="0" y="10.1" width="24" height="3.8" fill="#537233"/><rect x="10.1" y="0" width="3.8" height="24" fill="#537233"/></svg>
<div style="left:1187px;top:1157px;width:905px;height:124px;border:2px solid #8aa620;background:#ffffff;"></div>
<svg style="left:1200.8px;top:1179.8px;" width="20.4" height="20.4" viewBox="0 0 20.4 20.4"><circle cx="10.2" cy="10.2" r="9.1" fill="none" stroke="#1f5a0a" stroke-width="2.2"/><path d="M4.799999999999999 11.0 L8.6 14.2 L15.299999999999999 6.8999999999999995" fill="none" stroke="#1f5a0a" stroke-width="2.3"/></svg>
<svg style="left:1233.5px;top:1174.3px;" width="30" height="30" viewBox="0 0 30 30"><g stroke="#3f3f3f" stroke-width="1.9"><line x1="4.4" y1="4.5" x2="12" y2="4.5"/><line x1="0.3" y1="8.9" x2="10" y2="8.9"/><line x1="1.6" y1="13.4" x2="9.3" y2="13.4"/><line x1="2.3" y1="20.7" x2="12.7" y2="20.7"/><line x1="3.4" y1="25.2" x2="12.3" y2="25.2"/></g><path d="M17.8 1.4 L28.2 0.6 L24.4 11 L28.8 11 L14.3 29 L18.6 16.8 L13.4 17.2 Z" fill="#ffd21a" stroke="#ac860c" stroke-width="1.5" stroke-linejoin="round"/></svg>
<span class="t " style="left:1271.56px;top:1178.00px;font-size:22.5px;line-height:27px;color:#000000;-webkit-text-stroke:0.74px #000000;letter-spacing:1.351px;">Natural</span>
<span class="t " style="left:1380.56px;top:1178.00px;font-size:22.5px;line-height:27px;color:#5f8535;-webkit-text-stroke:0.74px #5f8535;letter-spacing:0.981px;">Point:</span>
<span class="t " style="left:1461.44px;top:1178.00px;font-size:23.5px;line-height:28px;color:#000000;letter-spacing:-0.113px;">SO2_Concentration</span>
<span class="t " style="left:1744.56px;top:1178.00px;font-size:22.5px;line-height:27px;color:#5f8535;-webkit-text-stroke:0.74px #5f8535;letter-spacing:0.715px;">Latency:</span>
<svg style="left:1852px;top:1166.5px;" width="120" height="47" viewBox="0 0 120 47"><rect x="1.0" y="1.0" width="118" height="45" fill="#ffffff" stroke="#8aa620" stroke-width="2"/></svg>
<span class="t " style="left:1872.12px;top:1178.00px;font-size:23.5px;line-height:28px;color:#000000;letter-spacing:-0.455px;">00:00:00</span>
<svg style="left:1994px;top:1180px;" width="20.5" height="20" viewBox="0 0 20.5 20"><rect x="0.6" y="0.6" width="6.8" height="18.8" rx="1" fill="#4a4f58" stroke="#0d0d0d" stroke-width="1.2"/><rect x="13.1" y="0.6" width="6.8" height="18.8" rx="1" fill="#4a4f58" stroke="#0d0d0d" stroke-width="1.2"/></svg>
<svg style="left:2043px;top:1176px;" width="24.2" height="28" viewBox="0 0 24.2 28"><path d="M8 4.6 V3.4 A2.4 2.4 0 0 1 10.4 1 H13.8 A2.4 2.4 0 0 1 16.2 3.4 V4.6" fill="none" stroke="#8b2d2d" stroke-width="2"/><path d="M4 6 V24.2 A2.8 2.8 0 0 0 6.8 27 H17.4 A2.8 2.8 0 0 0 20.2 24.2 V6 Z" fill="#ecdcda" stroke="#8b2d2d" stroke-width="2"/><rect x="0" y="4" width="24.2" height="2" fill="#8b2d2d"/><rect x="7.2" y="9.2" width="1.8" height="13.6" fill="#b87878"/><rect x="11.2" y="9.2" width="1.8" height="13.6" fill="#b87878"/><rect x="15.2" y="9.2" width="1.8" height="13.6" fill="#b87878"/></svg>
<div style="left:515px;top:1270px;width:1607px;height:2px;background:#ffffff;"></div>
<div style="left:0px;top:1272px;width:2160px;height:8px;background:#2f3d1f;"></div>
<div style="left:2152px;top:0px;width:8px;height:1280px;background:#2f3d1f;"></div></div></body></html>
